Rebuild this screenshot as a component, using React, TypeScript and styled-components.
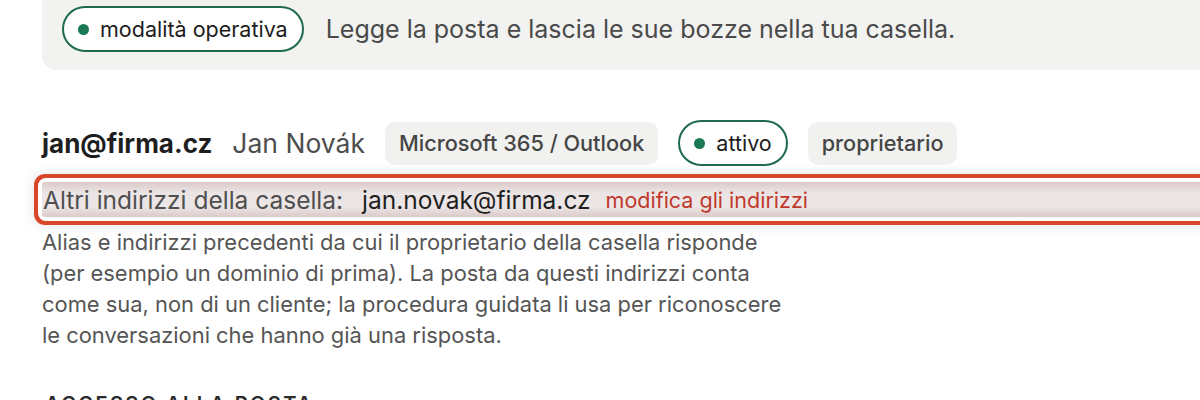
import { createGlobalStyle, styled } from "styled-components";

//////////////////////////////////////////////////////////////////// Global

const Global = createGlobalStyle`
  html, body {
    margin: 0;
    padding: 0;
    background: #ffffff;
    overflow: hidden;
  }
  body {
    font-family: Inter, "Noto Sans", sans-serif;
    color: #3f3f3f;
  }
`;

//////////////////////////////////////////////////////////////////// Layout

const Page = styled.div`
  width: 1240px;
  padding-left: 42px;
  box-sizing: border-box;
`;

const ModePanel = styled.div`
  display: flex;
  align-items: center;
  gap: 22px;
  background: #f2f2f0;
  border-radius: 0 0 0 14px;
  padding: 6px 20px 18px;
`;

const Pill = styled.span`
  display: inline-flex;
  align-items: center;
  gap: 11px;
  height: 46px;
  box-sizing: border-box;
  padding: 0 14px 0 14px;
  border: 2px solid #1f6b4c;
  border-radius: 23px;
  background: #fff;
  color: #1c1c1c;
  font-size: 21.5px;
  white-space: nowrap;

  &::before {
    content: "";
    width: 11px;
    height: 11px;
    border-radius: 50%;
    background: #1b7a55;
  }
`;

const ModeText = styled.span`
  font-size: 25px;
  color: #4a4a4a;
`;

//////////////////////////////////////////////////////////////////// Account

const AccountRow = styled.div`
  display: flex;
  align-items: center;
  gap: 20px;
  margin-top: 50px;
  height: 46px;
`;

const Email = styled.span`
  font-size: 26px;
  font-weight: 700;
  color: #1e1e1e;
`;

const Name = styled.span`
  font-size: 26.5px;
  color: #4d4d4d;
`;

const Chip = styled.span`
  display: inline-flex;
  align-items: center;
  height: 43px;
  padding: 0 14px;
  border-radius: 10px;
  background: #f1f1ef;
  color: #454545;
  font-size: 21.7px;
  font-weight: 500;
  white-space: nowrap;
`;

//////////////////////////////////////////////////////////////////// Aliases

const AliasRow = styled.div`
  display: flex;
  align-items: center;
  height: 35px;
  margin-top: 16px;
  padding-left: 1px;
  border-radius: 4px;
  background: linear-gradient(#dccaca, #ebe4e4 30%, #ece6e6 70%, #dccaca);
  box-shadow:
    0 0 0 4px #ffffff,
    0 0 0 8px #d9472b,
    0 0 12px 9px rgba(0, 0, 0, 0.1);
`;

const AliasLabel = styled.span`
  font-size: 24.5px;
  color: #4f4f4f;
  margin-right: 19px;
`;

const AliasValue = styled.span`
  font-size: 24.5px;
  color: #1f1f1f;
  margin-right: 15px;
`;

const EditLink = styled.a`
  font-size: 21.5px;
  color: #c0392b;
  text-decoration: none;
  cursor: pointer;
`;

const Help = styled.p`
  margin: 10px 0 0;
  width: 745px;
  font-size: 21.9px;
  line-height: 31px;
  color: #555;
`;

const SectionTitle = styled.h3`
  margin: 41px 0 0 3px;
  font-size: 20px;
  font-weight: 600;
  letter-spacing: 0.12em;
  color: #2b2b2b;
`;

//////////////////////////////////////////////////////////////////// App

export default function App() {
  return (
    <Page>
      <Global />
      <ModePanel>
        <Pill>modalità operativa</Pill>
        <ModeText>Legge la posta e lascia le sue bozze nella tua casella.</ModeText>
      </ModePanel>

      <AccountRow>
        <Email>jan@firma.cz</Email>
        <Name>Jan Novák</Name>
        <Chip>Microsoft 365 / Outlook</Chip>
        <Pill>attivo</Pill>
        <Chip>proprietario</Chip>
      </AccountRow>

      <AliasRow>
        <AliasLabel>Altri indirizzi della casella:</AliasLabel>
        <AliasValue>jan.novak@firma.cz</AliasValue>
        <EditLink>modifica gli indirizzi</EditLink>
      </AliasRow>

      <Help>
        Alias e indirizzi precedenti da cui il proprietario della casella risponde
        (per esempio un dominio di prima). La posta da questi indirizzi conta
        come sua, non di un cliente; la procedura guidata li usa per riconoscere
        le conversazioni che hanno già una risposta.
      </Help>

      <SectionTitle>ACCESSO ALLA POSTA</SectionTitle>
    </Page>
  );
}
